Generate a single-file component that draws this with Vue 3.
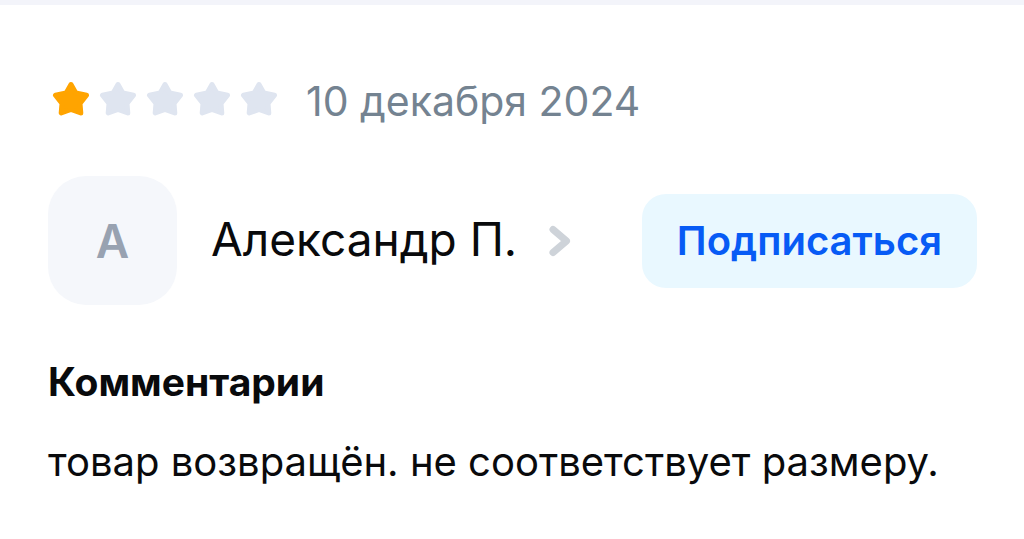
<script setup>
const rating = 1
const starPath = 'M19 3.500L23.800 12L34.500 14.300L28 22.500L28.800 32L19 28.400L9.200 32L10 22.500L3.500 14.300L14.200 12Z'
</script>

<template>
  <article class="review">
    <header class="meta">
      <div class="stars" role="img" aria-label="1 / 5">
        <svg v-for="n in 5" :key="n" class="star" :class="{ filled: n <= rating }" viewBox="0 0 38 36" aria-hidden="true">
          <path :d="starPath" />
        </svg>
      </div>
      <time datetime="2024-12-10">10 декабря 2024</time>
    </header>
    <div class="author">
      <a class="profile" href="#">
        <span class="avatar">А</span>
        <span class="name">Александр П.</span>
        <svg class="chevron" viewBox="0 0 22 32" aria-hidden="true"><path d="M4 4.500L17.500 16L4 27.500" /></svg>
      </a>
      <button type="button" class="follow">Подписаться</button>
    </div>
    <h2>Комментарии</h2>
    <p>товар возвращён. не соответствует размеру.</p>
  </article>
</template>

<style>
body { margin: 0; background: #fff; }
</style>

<style scoped>
.review {
  border-top: 5px solid #f3f4fa;
  padding: 72px 47px 48px 48px;
  font-family: Inter, "Noto Sans", sans-serif;
  color: #090a0c;
}
.meta { display: flex; align-items: center; gap: 28px; height: 48px; }
.stars { display: flex; gap: 9px; padding: 0 0 4px 4px; }
.star { width: 38px; height: 36px; fill: #dfe5f0; stroke: #dfe5f0; stroke-width: 5; stroke-linejoin: round; }
.star.filled { fill: #ffa400; stroke: #ffa400; }
time { font-size: 41px; line-height: 48px; color: #748391; }
.author { display: flex; justify-content: space-between; align-items: center; margin-top: 51px; }
.profile { display: flex; align-items: center; color: inherit; text-decoration: none; }
.avatar {
  width: 129px; height: 129px; border-radius: 38px; background: #f5f7fb;
  display: grid; place-items: center; color: #98a2b1; font-size: 46px; font-weight: 600;
}
.name { margin-left: 34px; padding-bottom: 4px; font-size: 46px; line-height: 56px; }
.chevron { width: 22px; height: 32px; margin-left: 32px; fill: none; stroke: #ced3d9; stroke-width: 7; stroke-linecap: round; stroke-linejoin: round; }
.follow {
  border: 0; border-radius: 24px; background: #e9f8ff; color: #075bf5;
  font: inherit; font-size: 40px; font-weight: 600; line-height: 48px; padding: 23px 35px;
}
h2 { margin: 53px 0 0; font-size: 39px; font-weight: 700; line-height: 48px; }
p { margin: 32px 0 0; font-size: 40px; line-height: 48px; }
</style>
